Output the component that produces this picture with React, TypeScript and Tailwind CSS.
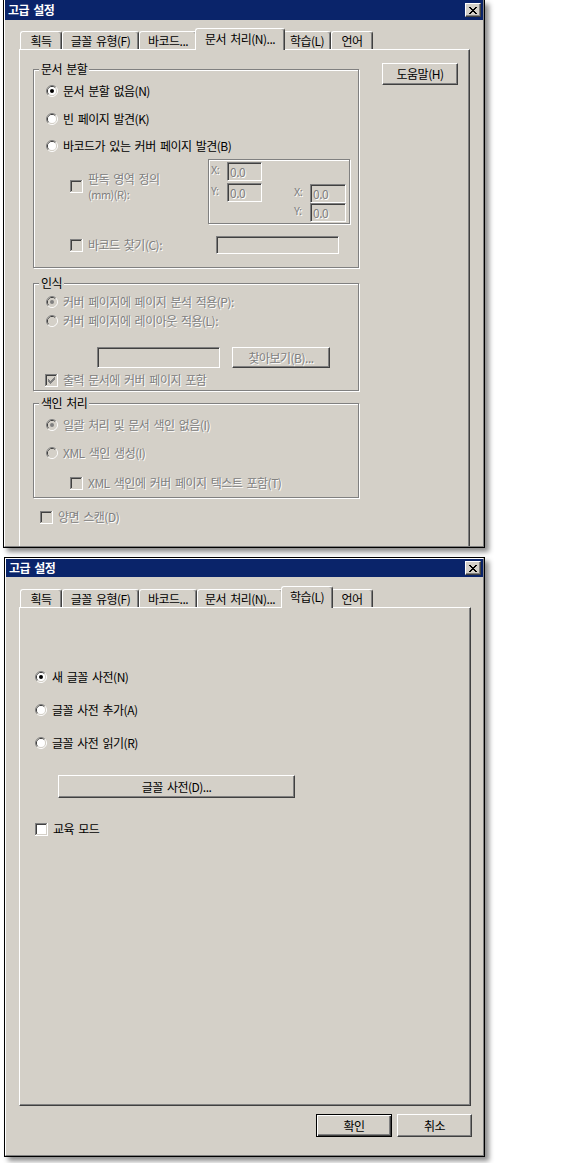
import React from 'react';

const dis = 'text-[#808080] [text-shadow:1px_1px_0_#ffffff]';

const Txt: React.FC<{ disabled?: boolean; className?: string; children: React.ReactNode }> = ({ disabled, className = '', children }) => (
  <span className={`${disabled ? dis : 'text-black'} whitespace-nowrap ${className}`}>{children}</span>
);

const Radio: React.FC<{ checked?: boolean; disabled?: boolean }> = ({ checked, disabled }) => (
  <svg width="12" height="12" viewBox="0 0 12 12" className="shrink-0">
    <path d="M2.11 9.89A5.5 5.5 0 0 1 9.89 2.11" fill="none" stroke="#808080" />
    <path d="M9.89 2.11A5.5 5.5 0 0 1 2.11 9.89" fill="none" stroke="#ffffff" />
    <path d="M2.82 9.18A4.5 4.5 0 0 1 9.18 2.82" fill="none" stroke="#404040" />
    <path d="M9.18 2.82A4.5 4.5 0 0 1 2.82 9.18" fill="none" stroke="#d4d0c8" />
    <circle cx="6" cy="6" r="4" fill={disabled ? '#d4d0c8' : '#ffffff'} />
    {checked && <circle cx="6" cy="6" r="2" fill={disabled ? '#808080' : '#000000'} />}
  </svg>
);

const tick = [5, 6, 7, 6, 5, 4, 3];

const Check: React.FC<{ checked?: boolean; disabled?: boolean }> = ({ checked, disabled }) => (
  <svg width="13" height="13" viewBox="0 0 13 13" shapeRendering="crispEdges" className="shrink-0">
    <rect x="0" y="0" width="13" height="13" fill="#ffffff" />
    <rect x="0" y="0" width="12" height="12" fill="#808080" />
    <rect x="1" y="1" width="11" height="11" fill="#d4d0c8" />
    <rect x="1" y="1" width="10" height="10" fill="#404040" />
    <rect x="2" y="2" width="9" height="9" fill={disabled ? '#d4d0c8' : '#ffffff'} />
    {checked &&
      tick.map((y, i) => <rect key={i} x={3 + i} y={y} width="1" height="3" fill={disabled ? '#808080' : '#000000'} />)}
  </svg>
);

const Btn: React.FC<{ className?: string; disabled?: boolean; isDefault?: boolean; children: React.ReactNode }> = ({
  className = '',
  disabled,
  isDefault,
  children,
}) => (
  <div
    className={`flex items-center justify-center bg-[#d4d0c8] border ${
      isDefault
        ? 'border-black shadow-[inset_1px_1px_0_#ffffff,inset_-1px_-1px_0_#404040,inset_-2px_-2px_0_#808080]'
        : 'border-t-white border-l-white border-r-[#404040] border-b-[#404040] shadow-[inset_-1px_-1px_0_#808080]'
    } ${className}`}
  >
    <Txt disabled={disabled}>{children}</Txt>
  </div>
);

const Field: React.FC<{ className?: string; value?: string }> = ({ className = '', value }) => (
  <div
    className={`flex items-center pl-[2px] bg-[#d4d0c8] border border-t-[#808080] border-l-[#808080] border-r-white border-b-white shadow-[inset_1px_1px_0_#404040,inset_-1px_-1px_0_#d4d0c8] ${className}`}
  >
    {value && <Txt disabled>{value}</Txt>}
  </div>
);

const Group: React.FC<{ title: string; className?: string; children: React.ReactNode }> = ({ title, className = '', children }) => (
  <div className={`relative flex flex-col border border-[#808080] shadow-[1px_1px_0_#ffffff,inset_1px_1px_0_#ffffff] ${className}`}>
    <span className="absolute left-[5px] top-[-9px] bg-[#d4d0c8] px-[2px] leading-[16px] whitespace-nowrap">{title}</span>
    {children}
  </div>
);

const Row: React.FC<{ className?: string; children: React.ReactNode }> = ({ className = '', children }) => (
  <div className={`h-[16px] flex items-center gap-[5px] ${className}`}>{children}</div>
);

const Coord: React.FC<{ label: string; className: string }> = ({ label, className }) => (
  <div className="flex items-start">
    <Txt disabled className="w-[16px] text-[11px] leading-[14px]">
      {label}
    </Txt>
    <Field className={className} value="0.0" />
  </div>
);

const CloseBtn = () => (
  <div className="w-[16px] h-[14px] flex items-center justify-center bg-[#d4d0c8] border border-t-white border-l-white border-r-[#404040] border-b-[#404040] shadow-[inset_-1px_-1px_0_#808080]">
    <svg width="8" height="7" viewBox="0 0 8 7" shapeRendering="crispEdges">
      <rect x="0" y="0" width="2" height="1" fill="#000" />
      <rect x="6" y="0" width="2" height="1" fill="#000" />
      <rect x="1" y="1" width="2" height="1" fill="#000" />
      <rect x="5" y="1" width="2" height="1" fill="#000" />
      <rect x="2" y="2" width="4" height="1" fill="#000" />
      <rect x="3" y="3" width="2" height="1" fill="#000" />
      <rect x="2" y="4" width="4" height="1" fill="#000" />
      <rect x="1" y="5" width="2" height="1" fill="#000" />
      <rect x="5" y="5" width="2" height="1" fill="#000" />
      <rect x="0" y="6" width="2" height="1" fill="#000" />
      <rect x="6" y="6" width="2" height="1" fill="#000" />
    </svg>
  </div>
);

const TitleBar: React.FC<{ h: string }> = ({ h }) => (
  <div className={`${h} shrink-0 flex items-center justify-between bg-[#0a246a] pl-[3px] pr-[2px]`}>
    <span className="text-white font-bold">고급 설정</span>
    <CloseBtn />
  </div>
);

const tabs: [string, string][] = [
  ['획득', 'w-[42px]'],
  ['글꼴 유형(F)', 'w-[77px]'],
  ['바코드...', 'w-[58px]'],
  ['문서 처리(N)...', 'w-[86px]'],
  ['학습(L)', 'w-[48px]'],
  ['언어', 'w-[42px]'],
];

const Tabs: React.FC<{ active: number }> = ({ active }) => (
  <div className="h-[21px] flex items-end pl-[1px]">
    {tabs.map(([label, w], i) => (
      <div key={label} className={`${w} flex flex-col justify-end`}>
        <div
          className={`${
            i === active ? 'relative z-10 -mx-[2px] -mb-px h-[22px] pb-[2px]' : 'h-[18px]'
          } flex items-center justify-center bg-[#d4d0c8] border-t border-x border-t-white border-l-white border-r-[#404040] rounded-t-[3px] shadow-[inset_-1px_0_0_#808080] whitespace-nowrap`}
        >
          {label}
        </div>
      </div>
    ))}
  </div>
);

function SplitDialog() {
  return (
    <div className="ml-[3px] w-[482px] h-[548px] border-x border-b border-black bg-[#d4d0c8] shadow-[4px_4px_5px_rgba(0,0,0,0.45)]">
      <div className="h-full flex flex-col border-x border-b border-l-white border-r-[#808080] border-b-[#808080]">
        <TitleBar h="h-[20px]" />
        <div className="flex-1 flex flex-col pl-[14px] pt-[8px]">
          <Tabs active={3} />
          <div className="w-[451px] flex-1 flex border-t border-x border-t-white border-l-white border-r-[#404040] shadow-[inset_-1px_0_0_#808080]">
            <div className="w-[339px] pl-[13px] flex flex-col">
              <Group title="문서 분할" className="mt-[19px] h-[199px] pt-[13px] pl-[12px]">
                <Row>
                  <Radio checked />
                  <Txt>문서 분할 없음(N)</Txt>
                </Row>
                <Row className="mt-[12px]">
                  <Radio />
                  <Txt>빈 페이지 발견(K)</Txt>
                </Row>
                <Row className="mt-[11px]">
                  <Radio />
                  <Txt>바코드가 있는 커버 페이지 발견(B)</Txt>
                </Row>
                <div className="mt-[5px] flex pl-[24px]">
                  <div className="w-[138px] mt-[12px] h-[31px] flex items-center gap-[5px]">
                    <Check disabled />
                    <div className="flex flex-col">
                      <Txt disabled className="leading-[16px]">판독 영역 정의</Txt>
                      <Txt disabled className="text-[11px] leading-[15px]">(mm)(R):</Txt>
                    </div>
                  </div>
                  <div className="w-[142px] h-[65px] flex border border-[#808080] shadow-[1px_1px_0_#ffffff,inset_1px_1px_0_#ffffff]">
                    <div className="flex flex-col gap-[2px] pt-[2px] pl-[2px]">
                      <Coord label="X:" className="w-[35px] h-[19px]" />
                      <Coord label="Y:" className="w-[35px] h-[19px]" />
                    </div>
                    <div className="ml-auto flex flex-col pt-[24px] pr-[3px]">
                      <Coord label="X:" className="w-[36px] h-[19px]" />
                      <Coord label="Y:" className="w-[36px] h-[19px]" />
                    </div>
                  </div>
                </div>
                <div className="mt-[12px] h-[18px] flex items-center pl-[24px]">
                  <div className="w-[146px] flex items-center gap-[5px]">
                    <Check disabled />
                    <Txt disabled>바코드 찾기(C):</Txt>
                  </div>
                  <Field className="w-[123px] h-[18px]" />
                </div>
              </Group>

              <Group title="인식" className="mt-[15px] h-[108px] pt-[10px] pl-[12px]">
                <Row>
                  <Radio checked disabled />
                  <Txt disabled>커버 페이지에 페이지 분석 적용(P):</Txt>
                </Row>
                <Row className="mt-[3px]">
                  <Radio disabled />
                  <Txt disabled>커버 페이지에 레이아웃 적용(L):</Txt>
                </Row>
                <div className="mt-[18px] h-[21px] flex">
                  <Field className="ml-[51px] w-[123px] h-[21px]" />
                  <Btn disabled className="ml-[12px] w-[98px] h-[21px]">
                    찾아보기(B)...
                  </Btn>
                </div>
                <Row className="mt-[4px] -ml-[1px]">
                  <Check checked disabled />
                  <Txt disabled>출력 문서에 커버 페이지 포함</Txt>
                </Row>
              </Group>

              <Group title="색인 처리" className="mt-[12px] h-[95px] pt-[13px] pl-[12px]">
                <Row>
                  <Radio checked disabled />
                  <Txt disabled>일괄 처리 및 문서 색인 없음(I)</Txt>
                </Row>
                <Row className="mt-[12px]">
                  <Radio disabled />
                  <Txt disabled>XML 색인 생성(I)</Txt>
                </Row>
                <Row className="mt-[14px] pl-[24px]">
                  <Check disabled />
                  <Txt disabled>XML 색인에 커버 페이지 텍스트 포함(T)</Txt>
                </Row>
              </Group>

              <Row className="mt-[11px] ml-[7px]">
                <Check disabled />
                <Txt disabled>양면 스캔(D)</Txt>
              </Row>
            </div>
            <Btn className="ml-[23px] mt-[13px] w-[76px] h-[22px]">도움말(H)</Btn>
          </div>
        </div>
      </div>
    </div>
  );
}

function LearnDialog() {
  return (
    <div className="mt-[9px] ml-[4px] w-[481px] h-[600px] border border-black bg-[#d4d0c8] shadow-[4px_4px_5px_rgba(0,0,0,0.45)]">
      <div className="h-full flex flex-col border border-t-white border-l-white border-r-[#808080] border-b-[#808080]">
        <TitleBar h="h-[18px]" />
        <div className="flex flex-col pl-[13px] pt-[9px]">
          <Tabs active={4} />
          <div className="w-[452px] h-[499px] flex flex-col pl-[15px] pt-[61px] border border-t-white border-l-white border-r-[#404040] border-b-[#404040] shadow-[inset_-1px_-1px_0_#808080]">
            <Row>
              <Radio checked />
              <Txt>새 글꼴 사전(N)</Txt>
            </Row>
            <Row className="mt-[17px]">
              <Radio />
              <Txt>글꼴 사전 추가(A)</Txt>
            </Row>
            <Row className="mt-[17px]">
              <Radio />
              <Txt>글꼴 사전 읽기(R)</Txt>
            </Row>
            <Btn className="mt-[24px] ml-[23px] w-[237px] h-[23px]">글꼴 사전(D)...</Btn>
            <Row className="mt-[23px]">
              <Check />
              <Txt>교육 모드</Txt>
            </Row>
          </div>
          <div className="w-[453px] mt-[8px] flex justify-end gap-[5px]">
            <Btn isDefault className="w-[76px] h-[23px]">
              확인
            </Btn>
            <Btn className="w-[75px] h-[23px]">취소</Btn>
          </div>
        </div>
      </div>
    </div>
  );
}

export default function App() {
  return (
    <div className="w-[582px] h-[1163px] overflow-hidden bg-white font-['Noto_Sans_CJK_KR','Noto_Sans',sans-serif] text-[12px] leading-[16px] tracking-[-0.5px] [word-spacing:2px] text-black">
      <SplitDialog />
      <LearnDialog />
    </div>
  );
}
